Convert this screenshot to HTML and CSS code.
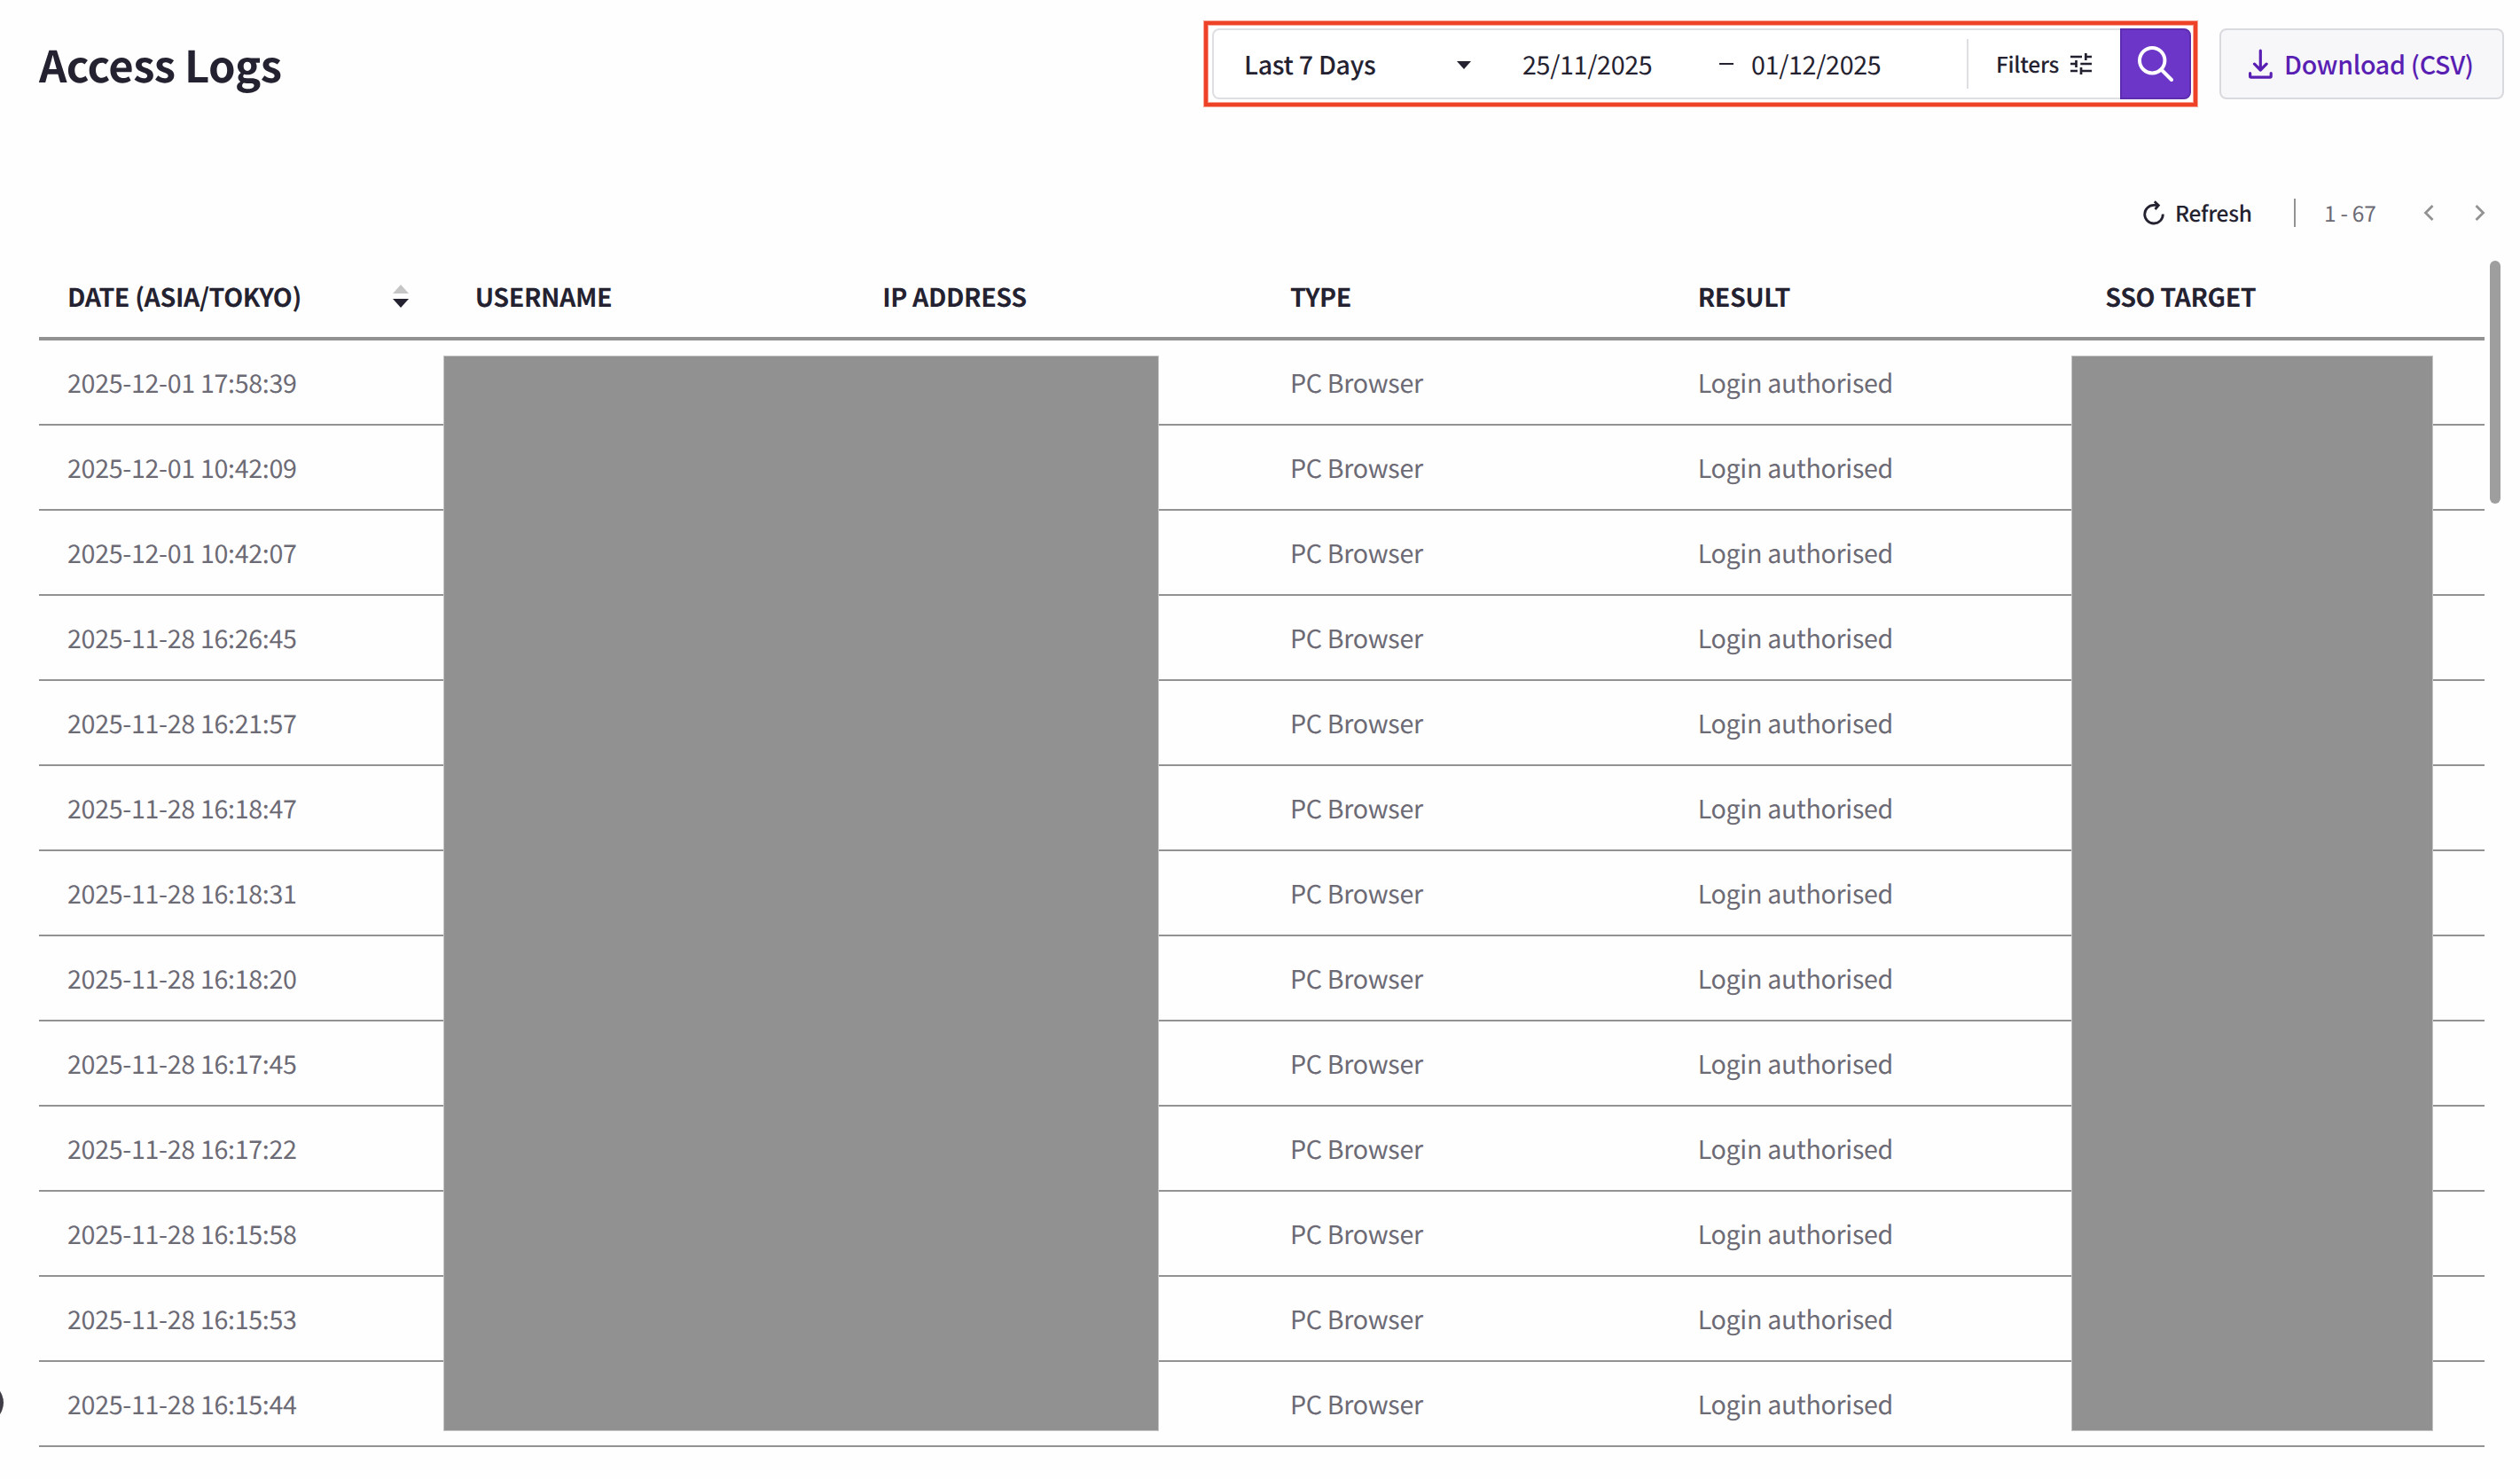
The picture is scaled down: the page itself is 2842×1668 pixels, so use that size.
FILE: index.html
```html
<!DOCTYPE html>
<html lang="en">
<head>
<meta charset="utf-8">
<title>Access Logs</title>
<link rel="stylesheet" href="styles.css">
</head>
<body>
<main class="page">
  <header class="topbar">
    <h1 class="title">Access Logs</h1>
    <div class="highlight">
      <form class="search">
        <div class="range"><span class="range-label">Last 7 Days</span>
          <svg class="caret" viewBox="0 0 16 9"><path d="M0 0h16l-8 9z"/></svg></div>
        <span class="date from">25/11/2025</span>
        <span class="dash"></span>
        <span class="date to">01/12/2025</span>
        <div class="filters"><span class="filters-label">Filters</span>
          <svg class="sliders" viewBox="0 0 24 24"><path d="M0 4h13M17 4h7M17.300 0v8M0 12h7M6.500 8v8M11.300 12H24M0 20h8M12 20h12M12 16v8"/></svg></div>
        <button class="go" type="button" aria-label="Search">
          <svg viewBox="0 0 40 40"><circle cx="16.200" cy="16.200" r="14.200"/><path d="M26.500 26.500L38 38"/></svg></button>
      </form>
    </div>
    <button class="download" type="button">
      <svg viewBox="0 0 27 34"><path d="M13.300 2v22M6.500 17.200l6.800 6.800l6.800-6.800M1.600 27.500v3.500q0 1.200 1.200 1.200h21.200q1.200 0 1.200-1.200v-3.500"/></svg>
      <span>Download (CSV)</span></button>
  </header>
  <nav class="pager">
    <svg class="reload" viewBox="0 0 24 28"><path d="M22.300 15.500A10.300 10.300 0 1 1 12 5.400H17M12.800 1.300L17.300 5.600L13.500 10"/></svg>
    <span class="refresh">Refresh</span>
    <span class="sep"></span>
    <span class="count">1 - 67</span>
    <svg class="chev prev" viewBox="0 0 12 20"><path d="M10.500 2l-8 8l8 8"/></svg>
    <svg class="chev" viewBox="0 0 12 20"><path d="M1.500 2l8 8l-8 8"/></svg>
  </nav>
  <section class="log">
    <div class="table">
      <div class="row head">
        <span class="sortable">DATE (ASIA/TOKYO)
          <svg class="sort" viewBox="0 0 18 26"><path class="up" d="M0 10h18l-9-10z"/><path d="M0 16h18l-9 10z"/></svg></span>
        <span>USERNAME</span><span>IP ADDRESS</span><span>TYPE</span><span>RESULT</span><span>SSO TARGET</span>
      </div>
      <div class="row"><span>2025-12-01 17:58:39</span><span></span><span></span><span>PC Browser</span><span>Login authorised</span><span></span></div>
      <div class="row"><span>2025-12-01 10:42:09</span><span></span><span></span><span>PC Browser</span><span>Login authorised</span><span></span></div>
      <div class="row"><span>2025-12-01 10:42:07</span><span></span><span></span><span>PC Browser</span><span>Login authorised</span><span></span></div>
      <div class="row"><span>2025-11-28 16:26:45</span><span></span><span></span><span>PC Browser</span><span>Login authorised</span><span></span></div>
      <div class="row"><span>2025-11-28 16:21:57</span><span></span><span></span><span>PC Browser</span><span>Login authorised</span><span></span></div>
      <div class="row"><span>2025-11-28 16:18:47</span><span></span><span></span><span>PC Browser</span><span>Login authorised</span><span></span></div>
      <div class="row"><span>2025-11-28 16:18:31</span><span></span><span></span><span>PC Browser</span><span>Login authorised</span><span></span></div>
      <div class="row"><span>2025-11-28 16:18:20</span><span></span><span></span><span>PC Browser</span><span>Login authorised</span><span></span></div>
      <div class="row"><span>2025-11-28 16:17:45</span><span></span><span></span><span>PC Browser</span><span>Login authorised</span><span></span></div>
      <div class="row"><span>2025-11-28 16:17:22</span><span></span><span></span><span>PC Browser</span><span>Login authorised</span><span></span></div>
      <div class="row"><span>2025-11-28 16:15:58</span><span></span><span></span><span>PC Browser</span><span>Login authorised</span><span></span></div>
      <div class="row"><span>2025-11-28 16:15:53</span><span></span><span></span><span>PC Browser</span><span>Login authorised</span><span></span></div>
      <div class="row"><span>2025-11-28 16:15:44</span><span></span><span></span><span>PC Browser</span><span>Login authorised</span><span></span></div>
      <div class="mask mask-user"></div>
      <div class="mask mask-target"></div>
    </div>
    <div class="scrollbar"></div>
  </section>
  <div class="edge-handle"></div>
</main>
</body>
</html>
```
FILE: styles.css
```css
* { box-sizing: border-box; }
body {
  margin: 0;
  background: #fefefe;
  color: #242230;
  font-family: "Noto Sans CJK JP", "Noto Sans", sans-serif;
  font-size: 28.6px;
  line-height: 40px;
  letter-spacing: -0.3px;
  text-rendering: geometricPrecision;
}
button { font: inherit; letter-spacing: inherit; padding: 0; }
svg { display: block; flex: none; fill: none; stroke: currentColor; stroke-width: 3; }
.page { position: relative; width: 2842px; height: 1668px; overflow: hidden; }
.topbar { display: flex; height: 192px; padding: 24px 18px 0 44px; align-items: flex-start; }
.title { margin: 13px auto 0 0; font-size: 49px; line-height: 72px; letter-spacing: -0.6px; font-weight: 700; white-space: nowrap; }
.highlight {
  width: 1120px;
  height: 96px;
  margin-right: 25px;
  border: 4px solid #ee4228;
  padding: 4px 3px 4px 5px;
  background: #fff;
  box-shadow: 0 0 0 1px #f7a193, inset 0 0 0 1px #f7a193;
}
.search { display: flex; align-items: center; height: 80px; border: 2px solid #dedfe2; border-right: 0; border-radius: 8px; }
.range { display: flex; align-items: center; width: 256px; margin-left: 34px; font-weight: 500; justify-content: space-between; }
.range-label, .date, .filters-label { margin-top: 1px; white-space: nowrap; }
.caret { width: 16px; height: 9px; margin-top: 3px; fill: currentColor; stroke: none; }
.date { width: 222px; margin-left: 58px; }
.dash { width: 16px; height: 2px; background: #242230; }
.to { margin-left: 20px; width: 243px; }
.filters { display: flex; align-items: center; height: 56px; border-left: 2px solid #dedfe2; padding-left: 31px; font-size: 24.5px; font-weight: 500; }
.filters-label { width: 84px; }
.sliders { width: 24px; height: 24px; stroke-width: 2.7; }
.go { display: flex; align-items: center; justify-content: center; width: 80px; height: 80px; margin-left: auto; border: 2px solid #5d2db0; background: #6c37c9; color: #fff; border-radius: 0 8px 8px 0; }
.go svg { width: 40px; height: 40px; stroke-width: 4; stroke-linecap: round; }
.download { display: flex; align-items: center; gap: 13px; width: 321px; height: 80px; margin-top: 8px; padding-left: 31px; border: 2px solid #d9dade; border-radius: 8px; background: #f7f7fa; color: #591fb3; font-weight: 500; white-space: nowrap; }
.download svg { width: 27px; height: 34px; stroke-width: 3.2; stroke-linecap: round; stroke-linejoin: round; }
.pager { display: flex; align-items: center; justify-content: flex-end; height: 96px; padding: 0 39px 0 0; font-size: 24.5px; }
.reload { width: 24px; height: 28px; margin-right: 12px; stroke-width: 2.8; }
.refresh { width: 85px; margin-top: 2px; font-weight: 500; }
.sep { width: 2px; height: 32px; margin: 0 32px 0 49px; background: #929292; }
.count { width: 59px; margin-top: 2px; color: #6c6a75; white-space: nowrap; }
.chev { width: 12px; height: 20px; color: #929292; stroke-width: 2.8; }
.prev { margin: 0 46px 0 53px; }
.log { display: flex; height: 1380px; padding-left: 44px; }
.table { position: relative; width: 2758px; padding-top: 2px; }
.row { display: grid; grid-template-columns: repeat(6, 459.67px); height: 96px; padding-top: 2px; align-items: center; border-bottom: 2px solid #929292; color: #6c6a75; }
.row > span { padding-left: 32px; }
.head { height: 94px; padding-top: 0; border-bottom-width: 4px; color: #242230; font-weight: 700; letter-spacing: -0.4px; }
.sortable { display: flex; align-items: center; justify-content: space-between; padding-right: 43px; }
.sort { width: 18px; height: 26px; margin-top: -2px; fill: currentColor; stroke: none; }
.sort .up { fill: #c6c6c6; }
.mask { position: absolute; top: 113px; height: 1213px; border: 1px solid #c4c4c4; background: #919191; }
.mask-user { left: 456px; width: 807px; }
.mask-target { left: 2292px; width: 408px; }
.scrollbar { width: 12px; height: 274px; margin: 6px 0 0 6px; border-radius: 6px; background: #9e9e9e; }
.edge-handle { position: absolute; left: -42px; top: 1559px; width: 46px; height: 46px; border-radius: 50%; background: #403d47; }
```
